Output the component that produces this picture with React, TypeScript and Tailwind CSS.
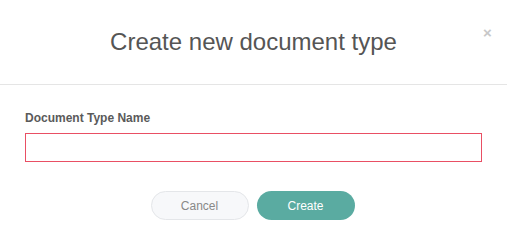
import React from "react";

export default function App() {
  return (
    <div className="w-[507px] h-[244px] bg-white font-['Liberation_Sans',Arial,sans-serif] relative">
      {/* header */}
      <div className="h-[85px] border-b border-[#e5e5e5] flex items-center justify-center pb-[1px]">
        <h1 className="text-[24px] text-[#555] leading-none">Create new document type</h1>
      </div>
      <button className="absolute left-[483px] top-[25px] text-[#c8c8c8] text-[15px] font-bold leading-none">
        ×
      </button>

      {/* body */}
      <div className="px-[25px] pt-[27px]">
        <label className="block text-[12px] font-bold text-[#5a5a5a] leading-none">Document Type Name</label>
        <input
          type="text"
          className="mt-[9px] block w-[457px] h-[29px] border border-[#e94f64] bg-white outline-none px-2 text-sm"
        />
      </div>

      {/* footer */}
      <div className="flex justify-center gap-[8px] mt-[29px] pr-[2px]">
        <button className="w-[98px] h-[29px] rounded-full bg-[#f7f8fa] border border-[#e4e6e9] text-[12px] text-[#888]">
          Cancel
        </button>
        <button className="w-[98px] h-[29px] rounded-full bg-[#5aaba1] text-[12px] text-white">
          Create
        </button>
      </div>
    </div>
  );
}
